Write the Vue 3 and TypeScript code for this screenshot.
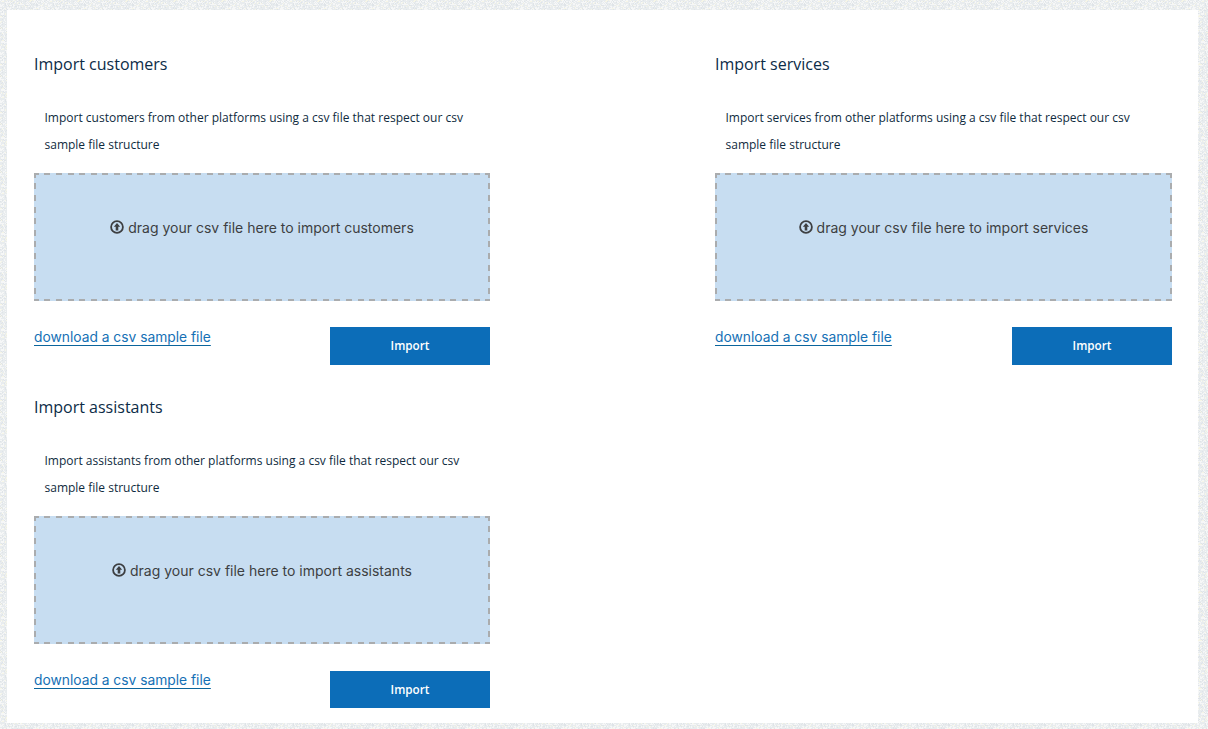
<script setup lang="ts">
const sections = [
  { name: 'customers' },
  { name: 'services' },
  { name: 'assistants' },
]

// speckled page texture, built once as a small svg tile
function noiseTile(size: number): string {
  let seed = 7
  const next = () => {
    seed = (seed * 16807) % 2147483647
    return seed / 2147483647
  }
  let rects = ''
  for (let y = 0; y < size; y++) {
    for (let x = 0; x < size; x++) {
      const r = next()
      let fill = ''
      if (r < 0.3) fill = '#f6f7f7'
      else if (r < 0.38) fill = '#f7f6e6'
      else if (r < 0.5) fill = '#dfe4e8'
      if (fill) rects += `<rect x='${x}' y='${y}' width='1' height='1' fill='${fill}'/>`
    }
  }
  const svg = `<svg xmlns='http://www.w3.org/2000/svg' width='${size}' height='${size}' shape-rendering='crispEdges'>${rects}</svg>`
  return `url("data:image/svg+xml,${encodeURIComponent(svg)}")`
}

const pageStyle = { backgroundImage: noiseTile(48) }
</script>

<template>
  <div class="page" :style="pageStyle">
    <main class="card">
      <section v-for="section in sections" :key="section.name" class="import">
        <h2 class="import__title">Import {{ section.name }}</h2>
        <p class="import__desc">
          Import {{ section.name }} from other platforms using a csv file that respect our csv
          sample file structure
        </p>
        <div class="dropzone">
          <svg class="dropzone__icon" viewBox="0 0 14 14" width="14" height="14" aria-hidden="true">
            <circle cx="7" cy="7" r="5.9" fill="none" stroke="#3d3f42" stroke-width="1.8" />
            <path d="M7 3 10.2 6.8H8.3V10.4H5.7V6.8H3.8Z" fill="#3d3f42" />
          </svg>
          <span>drag your csv file here to import {{ section.name }}</span>
        </div>
        <div class="import__footer">
          <a class="import__link" href="#">download a csv sample file</a>
          <button class="import__button" type="button">Import</button>
        </div>
      </section>
    </main>
  </div>
</template>

<style>
html,
body {
  margin: 0;
  height: 100%;
  overflow: hidden;
}
</style>

<style scoped>
.page {
  box-sizing: border-box;
  height: 729px;
  padding: 10px 10px 6px 7px;
  background-color: #e8ecee;
}

.card {
  box-sizing: border-box;
  height: 713px;
  padding-left: 27px;
  padding-right: 26px;
  background: #fff;
  display: grid;
  grid-template-columns: 456px 457px;
  grid-auto-rows: 343px;
  column-gap: 225px;
}

.import {
  padding-top: 43px;
}

.import__title {
  margin: 0;
  font: 400 16px/22px 'Open Sans', sans-serif;
  color: #0c2c47;
}

.import__desc {
  margin: 28.5px 0 0;
  padding-left: 10.5px;
  max-width: 430px;
  font: 400 12px/27px 'Open Sans', sans-serif;
  color: #0f2b40;
}

/* long dashes, wider than what border: dashed gives */
.dropzone {
  --dash: #aaacae 0 4.7px, transparent 4.7px 10.3px, #aaacae 10.3px 11.6px;
  box-sizing: border-box;
  height: 128px;
  margin-top: 15.5px;
  padding-bottom: 19px;
  display: flex;
  align-items: center;
  justify-content: center;
  gap: 4px;
  background-color: #c7ddf1;
  background-image:
    repeating-linear-gradient(90deg, var(--dash)),
    repeating-linear-gradient(90deg, var(--dash)),
    repeating-linear-gradient(180deg, var(--dash)),
    repeating-linear-gradient(180deg, var(--dash));
  background-size: 100% 2px, 100% 2px, 2px 100%, 2px 100%;
  background-position: top left, bottom left, top left, top right;
  background-repeat: no-repeat;
  font: 400 14px Inter, sans-serif;
  color: #3d3f42;
}

.dropzone__icon {
  flex: none;
  margin-top: -1px;
}

.import__footer {
  margin-top: 26px;
  display: flex;
  justify-content: space-between;
  align-items: flex-start;
}

.import__link {
  margin-top: 2px;
  font: 400 13.8px/16px Inter, sans-serif;
  color: #1570b5;
  text-decoration-color: #0b659c;
  text-decoration-thickness: 1.4px;
  text-underline-offset: 2.5px;
}

.import__button {
  width: 160px;
  height: 38px;
  padding: 0 0 2px;
  border: 0;
  background: #0c6db8;
  color: #fff;
  font: 600 11.7px 'Open Sans', sans-serif;
}

.import:nth-child(3) .import__button {
  height: 37px;
  margin-top: 1px;
}
</style>
